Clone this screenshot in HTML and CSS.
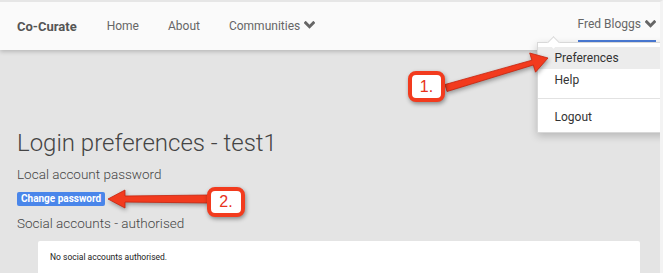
FILE: index.html
```html
<!DOCTYPE html>
<html lang="en">
<head>
    <meta charset="UTF-8">
    <title>Co-Curate - Login preferences</title>
    <link rel="stylesheet" href="styles.css">
</head>
<body>
    <div class="page">
        <nav class="navbar">
            <a class="brand" href="#">Co-Curate</a>
            <ul class="nav-links">
                <li><a href="#">Home</a></li>
                <li><a href="#">About</a></li>
                <li><a href="#">Communities <svg class="chevron" viewBox="0 0 10 7"><path d="M1.5 1.5 L5 5 L8.5 1.5"/></svg></a></li>
            </ul>
            <div class="user-menu">
                <a class="user-toggle" href="#">Fred Bloggs <svg class="chevron" viewBox="0 0 10 7"><path d="M1.5 1.5 L5 5 L8.5 1.5"/></svg></a>
                <ul class="dropdown">
                    <li class="active"><a href="#">Preferences</a></li>
                    <li><a href="#">Help</a></li>
                    <li class="divider"></li>
                    <li><a href="#">Logout</a></li>
                </ul>
            </div>
        </nav>

        <main class="content">
            <h1>Login preferences - test1</h1>
            <h3>Local account password</h3>
            <a class="btn" href="#">Change password</a>
            <h3>Social accounts - authorised</h3>
            <div class="card">
                <p>No social accounts authorised.</p>
            </div>
        </main>

        <!-- screenshot annotations -->
        <svg class="annotations" width="663" height="273" viewBox="0 0 663 273">
            <polygon class="arrow" points="445,84.5 531.9,60.2 529.7,53 548,58 535.5,72.2 533.3,65 447,91.5"/>
            <polygon class="arrow" points="210,195 125,196 125,190 108,199 125,208 125,202 210,203"/>
        </svg>
        <div class="callout callout-1">1.</div>
        <div class="callout callout-2">2.</div>
    </div>
</body>
</html>
```

FILE: styles.css
```css
* {
    margin: 0;
    padding: 0;
    box-sizing: border-box;
}

body {
    font-family: Roboto, 'Liberation Sans', Arial, sans-serif;
    background: #e4e4e4;
    color: #444;
}

a {
    text-decoration: none;
    color: inherit;
}

ul {
    list-style: none;
}

.page {
    position: relative;
    width: 663px;
    height: 273px;
    overflow: hidden;
    border-top: 2px solid #e6e6e6;
    border-right: 3px solid #f3f3f3;
}

.navbar {
    display: flex;
    align-items: center;
    height: 48px;
    padding: 0 4px 0 17px;
    background: #fafafa;
    box-shadow: 0 2px 4px rgba(0, 0, 0, 0.18);
    position: relative;
    z-index: 2;
}

.brand {
    font-size: 13px;
    font-weight: 700;
    color: #555;
    margin-right: 30px;
}

.nav-links {
    display: flex;
    gap: 29px;
    font-size: 12px;
    color: #666;
}

.chevron {
    width: 11px;
    height: 8px;
    margin-left: 1px;
    fill: none;
    stroke: #666;
    stroke-width: 2.6;
    stroke-linecap: square;
    vertical-align: 1px;
}

.user-menu {
    margin-left: auto;
    position: relative;
    align-self: flex-start;
}

.user-toggle {
    display: flex;
    align-items: center;
    gap: 3px;
    height: 40px;
    padding-top: 5px;
    font-size: 12px;
    color: #666;
    border-bottom: 2px solid #4b7bd6;
}

.dropdown {
    position: absolute;
    top: 40px;
    left: -41px;
    width: 130px;
    background: #fff;
    border: 1px solid #d8d8d8;
    box-shadow: 0 3px 8px rgba(0, 0, 0, 0.2);
    padding: 4px 0 4px;
    font-size: 12px;
    color: #333;
}

.dropdown::before {
    content: "";
    position: absolute;
    top: -5px;
    left: 11px;
    width: 8px;
    height: 8px;
    background: #fff;
    border-top: 1px solid #d8d8d8;
    border-left: 1px solid #d8d8d8;
    transform: rotate(45deg);
}

.dropdown li a {
    display: block;
    height: 22px;
    line-height: 22px;
    padding: 0 17px;
}

.dropdown li.active a {
    background: #ececec;
}

.dropdown .divider {
    height: 1px;
    background: #e2e2e2;
    margin: 7px 0;
}

.content {
    padding: 78px 17px 0;
}

h1 {
    font-size: 24px;
    font-weight: 300;
    color: #444;
    line-height: 30px;
    margin-bottom: 7px;
}

h3 {
    font-size: 13.5px;
    font-weight: 300;
    color: #444;
    line-height: 18px;
}

.btn {
    display: inline-block;
    margin: 9px 0 8px;
    height: 14px;
    line-height: 14px;
    padding: 0 4px;
    background: #4a86ea;
    color: #fff;
    font-size: 10px;
    font-weight: 700;
    border-radius: 2px;
}

.card {
    margin: 9px 3px 0 21px;
    background: #fff;
    border-radius: 2px;
    padding: 10px 12px;
    height: 40px;
}

.card p {
    font-size: 8.5px;
    color: #222;
    line-height: 12px;
}

.annotations {
    position: absolute;
    top: -2px;
    left: 0;
    z-index: 5;
    pointer-events: none;
    filter: drop-shadow(1px 2px 2px rgba(0, 0, 0, 0.35));
}

.arrow {
    fill: #f23b1e;
    stroke: #c5220c;
    stroke-width: 0.8;
    stroke-linejoin: round;
}

.callout {
    position: absolute;
    z-index: 6;
    display: flex;
    align-items: center;
    justify-content: center;
    background: #fff;
    border: 4px solid #f23b1e;
    border-radius: 8px;
    box-shadow: 1px 2px 4px rgba(0, 0, 0, 0.4);
    color: #e8321a;
    font-size: 16px;
    font-family: 'Liberation Sans', Arial, sans-serif;
}

.callout-1 {
    left: 408px;
    top: 69px;
    width: 37px;
    height: 31px;
}

.callout-2 {
    left: 207px;
    top: 185px;
    width: 38px;
    height: 30px;
}
```
